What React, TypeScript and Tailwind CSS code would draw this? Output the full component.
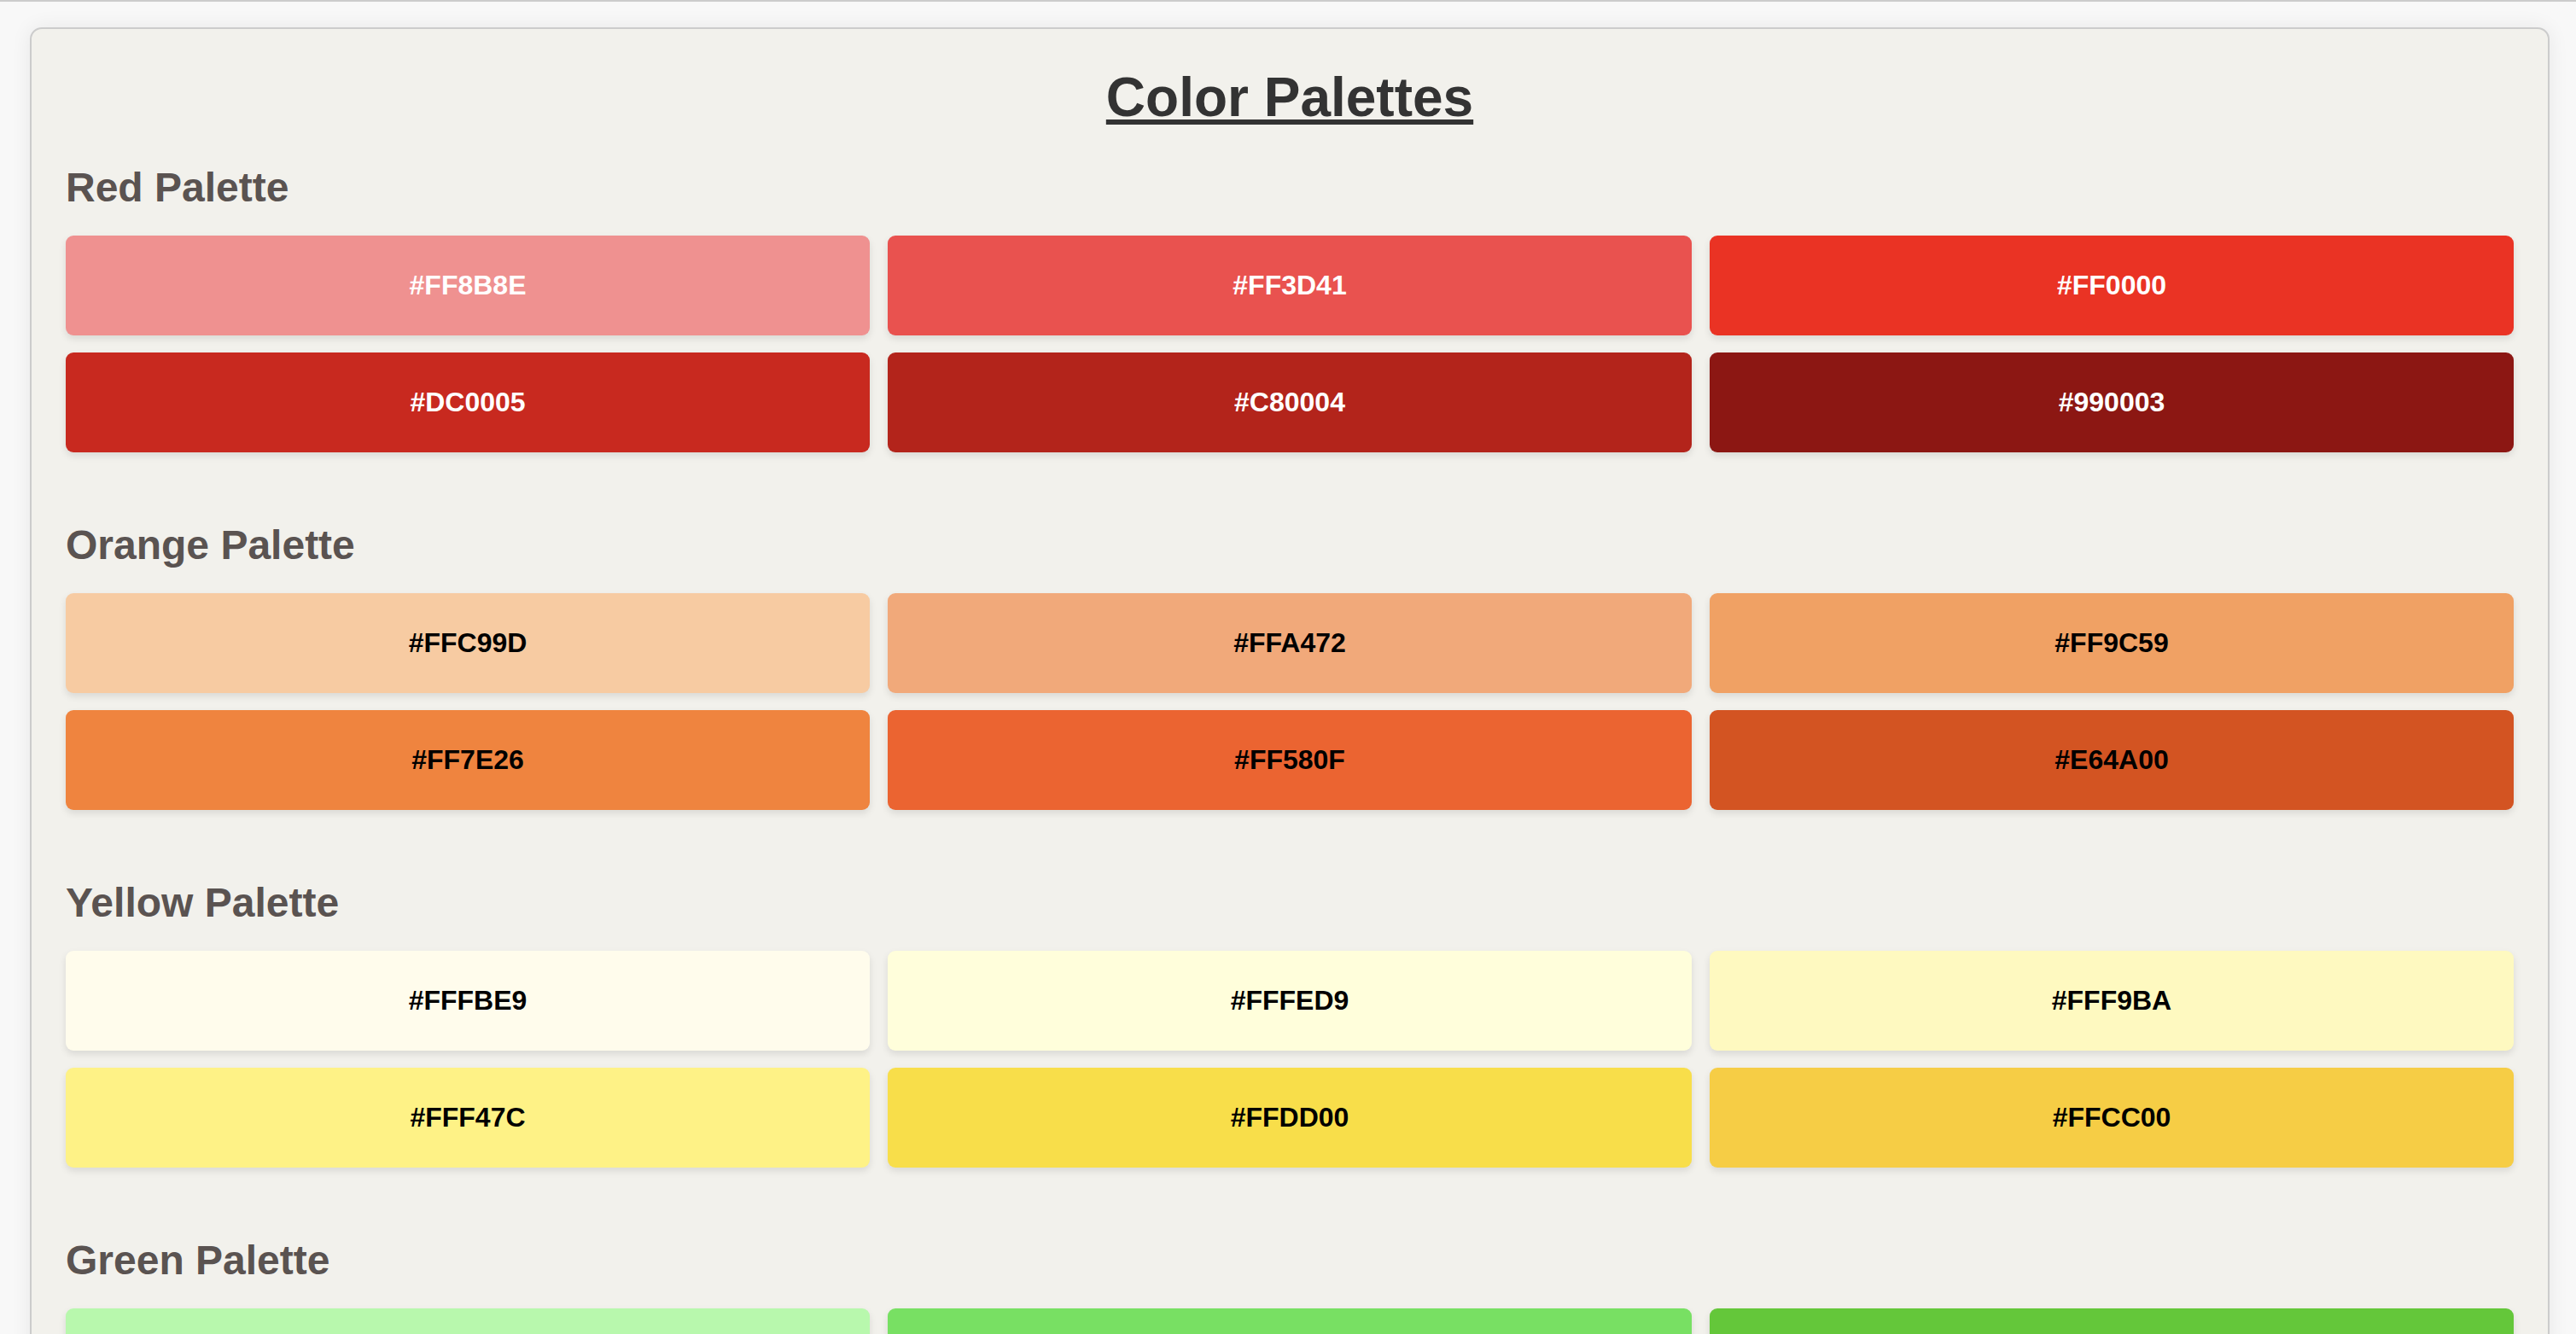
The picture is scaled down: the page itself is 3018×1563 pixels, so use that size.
import React from "react";

type Swatch = { label: string; bg: string; dark: boolean };
type Palette = { name: string; swatches: Swatch[] };

const palettes: Palette[] = [
  {
    name: "Red Palette",
    swatches: [
      { label: "#FF8B8E", bg: "#ef9190", dark: false },
      { label: "#FF3D41", bg: "#e9524f", dark: false },
      { label: "#FF0000", bg: "#ea3324", dark: false },
      { label: "#DC0005", bg: "#c8291f", dark: false },
      { label: "#C80004", bg: "#b3241b", dark: false },
      { label: "#990003", bg: "#8c1713", dark: false },
    ],
  },
  {
    name: "Orange Palette",
    swatches: [
      { label: "#FFC99D", bg: "#f7cba2", dark: true },
      { label: "#FFA472", bg: "#f1a97a", dark: true },
      { label: "#FF9C59", bg: "#f0a164", dark: true },
      { label: "#FF7E26", bg: "#ef843f", dark: true },
      { label: "#FF580F", bg: "#eb6431", dark: true },
      { label: "#E64A00", bg: "#d35422", dark: true },
    ],
  },
  {
    name: "Yellow Palette",
    swatches: [
      { label: "#FFFBE9", bg: "#fffcec", dark: true },
      { label: "#FFFED9", bg: "#fffedb", dark: true },
      { label: "#FFF9BA", bg: "#fef9c0", dark: true },
      { label: "#FFF47C", bg: "#fef286", dark: true },
      { label: "#FFDD00", bg: "#f8de4a", dark: true },
      { label: "#FFCC00", bg: "#f6cd45", dark: true },
    ],
  },
  {
    name: "Green Palette",
    swatches: [
      { label: "#B8FFAD", bg: "#b8f8ad", dark: true },
      { label: "#6FF250", bg: "#78e063", dark: true },
      { label: "#55D528", bg: "#64c73a", dark: true },
      { label: "#3DB814", bg: "#4fae2c", dark: false },
      { label: "#2A9A0A", bg: "#3d9222", dark: false },
      { label: "#1C7505", bg: "#2c7019", dark: false },
    ],
  },
];

function SwatchBox({ s }: { s: Swatch }) {
  return (
    <div
      className={`h-[117px] rounded-[9px] flex items-center justify-center text-[32px] font-bold leading-[37px] shadow-[0_4px_8px_rgba(0,0,0,0.1)] ${
        s.dark ? "text-black" : "text-white"
      }`}
      style={{ backgroundColor: s.bg }}
    >
      {s.label}
    </div>
  );
}

export default function App() {
  return (
    <div
      className="min-h-screen bg-[#f8f8f8] border-t-2 border-[#cccccc] pt-[30px] pl-[35px] pr-[31px] pb-[40px]"
      style={{ fontFamily: '"Liberation Sans", Arial, sans-serif' }}
    >
      <div className="bg-[#f2f1ec] border-2 border-[#cccccc] rounded-[14px] p-[40px] shadow-[0_0_24px_rgba(0,0,0,0.07)]">
        <h1 className="mt-[8px] mb-[50px] text-center text-[64px] leading-[64px] font-bold text-[#333333] underline decoration-[6px] underline-offset-[4px]">
          Color Palettes
        </h1>
        <div className="flex flex-col gap-[85px]">
          {palettes.map((p) => (
            <section key={p.name}>
              <h2 className="mb-[32px] text-[48px] leading-[48px] font-bold text-[#5a5351]">
                {p.name}
              </h2>
              <div className="grid grid-cols-3 gap-x-[21px] gap-y-[20px]">
                {p.swatches.map((s) => (
                  <SwatchBox key={s.label} s={s} />
                ))}
              </div>
            </section>
          ))}
        </div>
      </div>
    </div>
  );
}
